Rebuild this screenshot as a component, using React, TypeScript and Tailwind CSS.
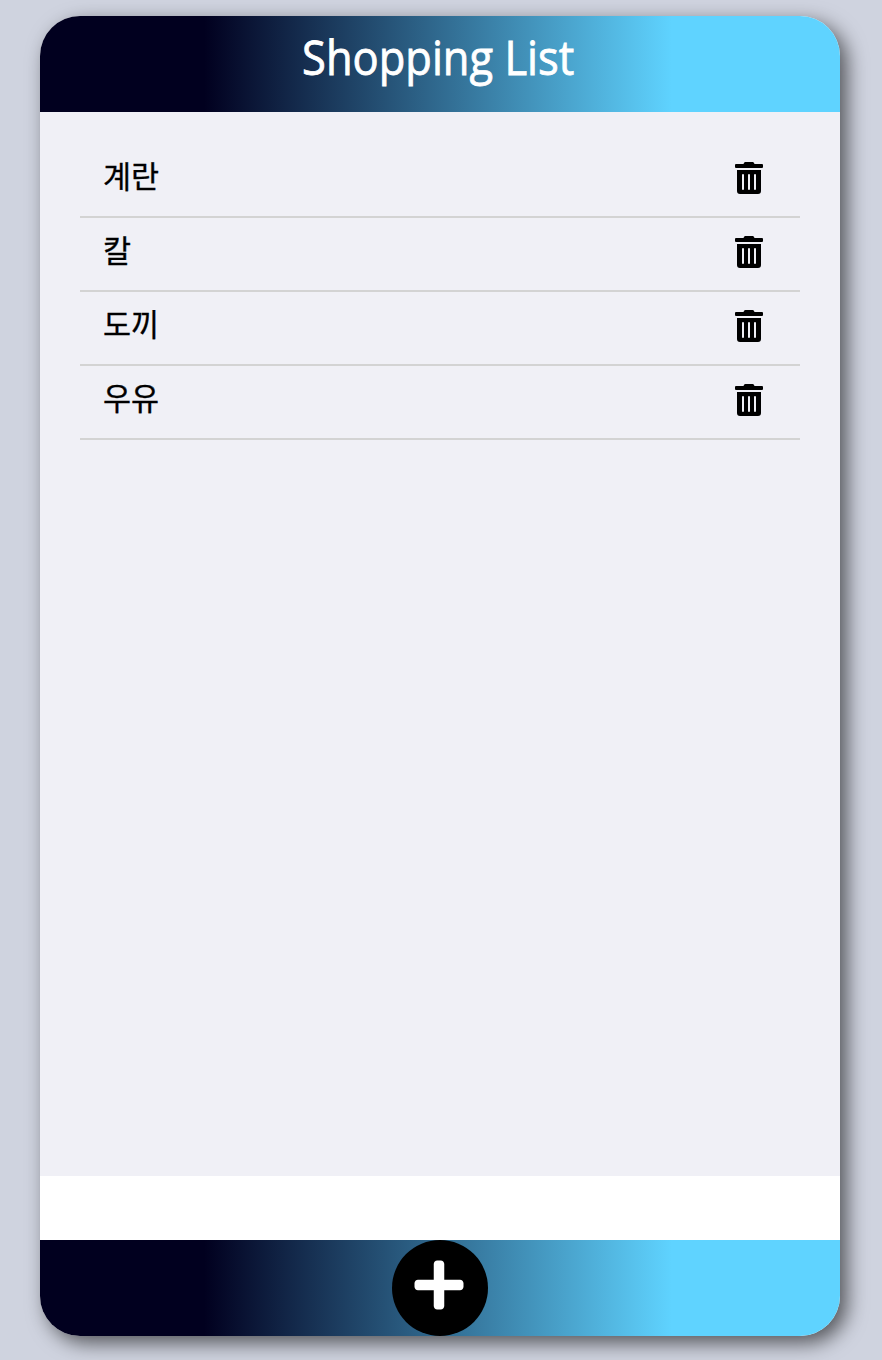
import { FaPlus, FaTrashAlt } from "react-icons/fa";

const items = ["계란", "칼", "도끼", "우유"];
const bar = "bg-[linear-gradient(90deg,#01001f_0%,#01001f_20.5%,#5fd3ff_79%,#5fd3ff_100%)]";

export default function App() {
  return (
    <div className="h-[1360px] overflow-hidden bg-[#cfd3df] pt-4 pl-10 font-['Noto_Sans_CJK_KR',sans-serif]">
      <main className="flex h-[1320px] w-[800px] flex-col overflow-hidden rounded-[40px] bg-white shadow-[7px_7px_20px_0px_rgba(0,0,0,0.6)]">
        <header className={`flex h-24 shrink-0 justify-center pt-[7px] ${bar}`}>
          <h1 className="-ml-[3px] scale-x-[0.925] font-['Open_Sans',sans-serif] text-[47px] leading-[68px] font-medium text-white [-webkit-text-stroke:0.8px_white]">Shopping List</h1>
        </header>
        <ul className="h-[1064px] shrink-0 bg-[#f0f0f6] px-10 pt-8">
          {items.map((item) => (
            <li key={item} className="flex h-[74px] justify-between border-b-2 border-[#d3d3d3] pr-[37px] pl-[23px]">
              <span className="pt-[11px] text-[30.5px] leading-[40px] text-black [-webkit-text-stroke:0.3px_black]">{item}</span>
              <FaTrashAlt className="mt-[18px] h-8 w-7 text-black" />
            </li>
          ))}
        </ul>
        <footer className={`mt-16 flex h-24 shrink-0 justify-center ${bar}`}>
          <button className="flex size-24 justify-center rounded-full bg-black pt-[17px] pr-0.5" aria-label="Add">
            <FaPlus className="size-14 text-white" />
          </button>
        </footer>
      </main>
    </div>
  );
}
